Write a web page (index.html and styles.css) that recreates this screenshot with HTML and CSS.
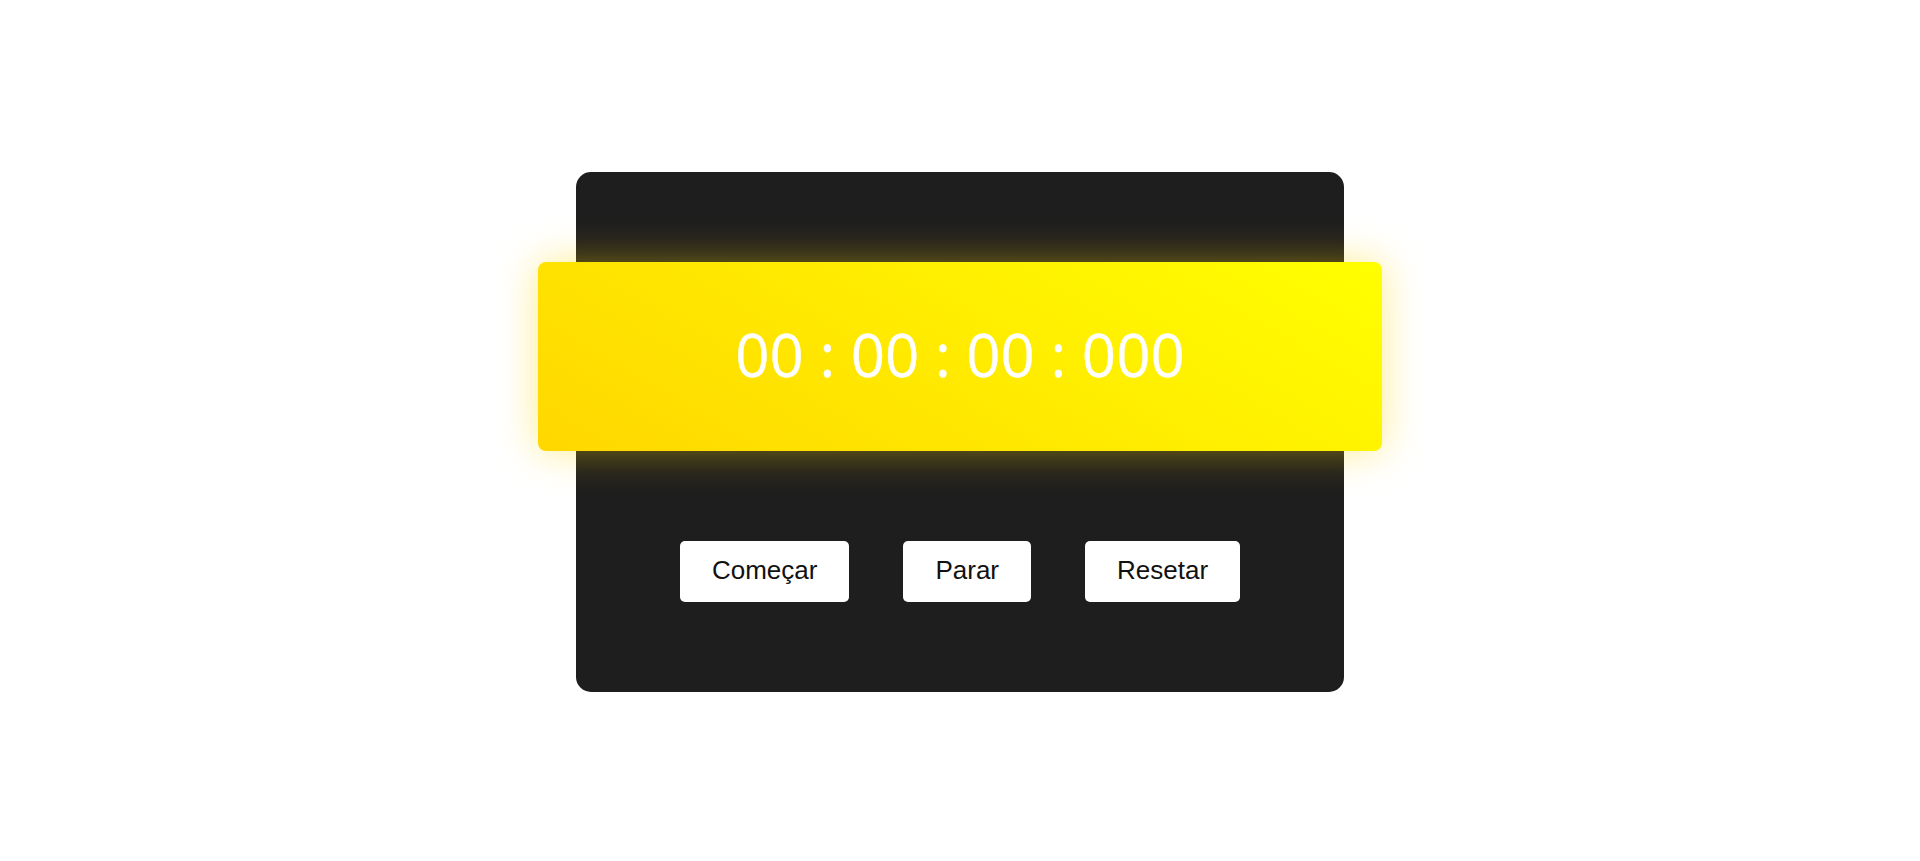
FILE: index.html
```html
<!DOCTYPE html>
<html lang="pt">
<head>
<meta charset="utf-8">
<title>Cronômetro</title>
<link rel="stylesheet" href="styles.css">
</head>
<body>
<main class="page">
  <section class="card">
    <div class="display">
      <span class="time">00 : 00 : 00 : 000</span>
    </div>
    <div class="controls">
      <button class="btn">Começar</button>
      <button class="btn">Parar</button>
      <button class="btn">Resetar</button>
    </div>
  </section>
</main>
</body>
</html>
```

FILE: styles.css
```css
* { box-sizing: border-box; }
html, body { margin: 0; padding: 0; background: #ffffff; }
.page {
  min-height: 861px;
  display: flex;
  align-items: flex-start;
  justify-content: center;
  padding-top: 172px;
}
.card {
  width: 768px;
  height: 520px;
  background: #1e1e1e;
  border-radius: 15px;
  padding: 90px 0;
  display: flex;
  flex-direction: column;
  align-items: center;
  gap: 90px;
}
.display {
  width: 844px;
  height: 189px;
  flex: none;
  border-radius: 8px;
  background: linear-gradient(30deg, #ffd700 0%, #ffff00 100%);
  box-shadow: 0 0 40px rgba(255, 215, 0, 0.45);
  display: flex;
  align-items: center;
  justify-content: center;
  padding-bottom: 5px;
}
.time {
  font-family: "Open Sans", "Noto Sans", sans-serif;
  font-size: 60px;
  color: #ffffff;
  line-height: 1;
  -webkit-text-stroke: 0.3px #ffffff;
}
.controls {
  display: flex;
  gap: 54px;
}
.btn {
  font-family: "Liberation Sans", Arial, sans-serif;
  font-size: 26px;
  line-height: 31px;
  color: #111111;
  background: #ffffff;
  border: none;
  border-radius: 5px;
  padding: 14px 32px 16px;
  cursor: pointer;
}
```
